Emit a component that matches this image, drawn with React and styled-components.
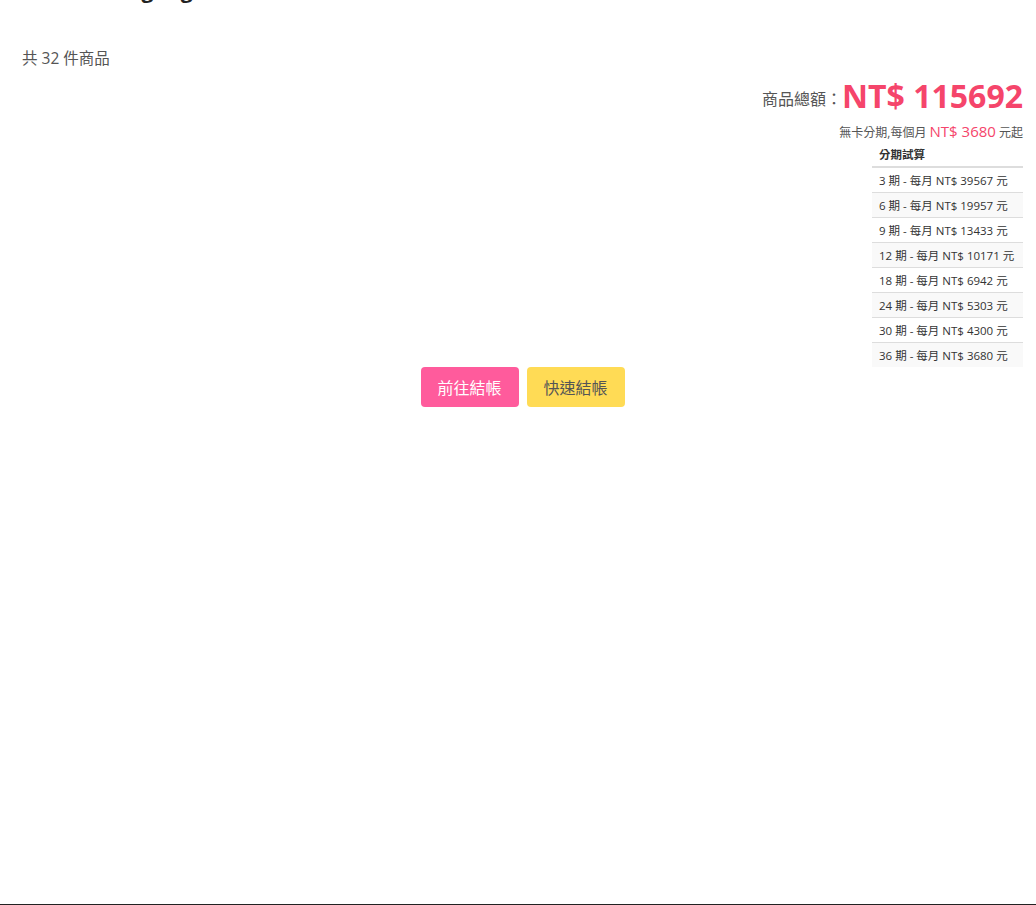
import React from "react";
import styled, { createGlobalStyle } from "styled-components";

const GlobalStyle = createGlobalStyle`
  html, body {
    margin: 0;
    padding: 0;
    background: #fff;
  }
  body {
    font-family: "Open Sans", "Noto Sans CJK TC", sans-serif;
    color: #555;
  }
  * {
    box-sizing: border-box;
  }
`;

const plans = [
  { months: 3, amount: 39567 },
  { months: 6, amount: 19957 },
  { months: 9, amount: 13433 },
  { months: 12, amount: 10171 },
  { months: 18, amount: 6942 },
  { months: 24, amount: 5303 },
  { months: 30, amount: 4300 },
  { months: 36, amount: 3680 },
];

const App = () => {
  return (
    <Page>
      <GlobalStyle />
      <Title>Order listing tag</Title>
      <ItemCount>共 32 件商品</ItemCount>
      <Summary>
        <TotalRow>
          商品總額：<TotalPrice>NT$ 115692</TotalPrice>
        </TotalRow>
        <Installment>
          無卡分期,每個月 <Highlight>NT$ 3680</Highlight> 元起
        </Installment>
        <PlanTable>
          <thead>
            <tr>
              <th>分期試算</th>
            </tr>
          </thead>
          <tbody>
            {plans.map((p) => (
              <tr key={p.months}>
                <td>
                  {p.months} 期 - 每月 NT$ {p.amount} 元
                </td>
              </tr>
            ))}
          </tbody>
        </PlanTable>
      </Summary>
      <Actions>
        <Button $variant="checkout">前往結帳</Button>
        <Button $variant="quick">快速結帳</Button>
      </Actions>
    </Page>
  );
};

const Page = styled.div`
  min-height: 905px;
  padding: 0 13px 0 22px;
  border-bottom: 1px solid #222;
  overflow: hidden;
`;

const Title = styled.h2`
  margin: -24px 0 0;
  font-size: 21px;
  line-height: 28px;
  height: 28px;
  font-weight: 700;
  color: #222;
`;

const ItemCount = styled.div`
  margin-top: 44px;
  font-size: 15.5px;
  line-height: 20px;
`;

const Summary = styled.div`
  display: flex;
  flex-direction: column;
  align-items: flex-end;
`;

const TotalRow = styled.div`
  margin-top: 8px;
  font-size: 16px;
  line-height: 40px;
  color: #555;
`;

const TotalPrice = styled.span`
  font-size: 32px;
  font-weight: 700;
  color: #f5456b;
  vertical-align: -3px;
`;

const Installment = styled.div`
  margin-top: 2px;
  font-size: 12px;
  line-height: 20px;
  color: #555;
`;

const Highlight = styled.span`
  font-size: 15px;
  color: #f5456b;
`;

const PlanTable = styled.table`
  width: 151px;
  margin-top: -1px;
  border-collapse: collapse;
  font-size: 11.5px;
  color: #333;

  th {
    text-align: left;
    font-weight: 700;
    padding: 3px 7px;
    height: 25px;
    border-bottom: 2px solid #ddd;
  }

  td {
    padding: 0 5px 0 7px;
    height: 25px;
    border-top: 1px solid #ddd;
    white-space: nowrap;
  }

  tbody tr:nth-of-type(even) {
    background: #f9f9f9;
  }
`;

const Actions = styled.div`
  display: flex;
  justify-content: center;
  gap: 8px;
`;

const Button = styled.button`
  width: 98px;
  height: 40px;
  border: none;
  border-radius: 4px;
  font-family: inherit;
  font-size: 16px;
  cursor: pointer;
  background: ${(p) => (p.$variant === "checkout" ? "#ff5b9c" : "#ffdb55")};
  color: ${(p) => (p.$variant === "checkout" ? "#fff" : "#555")};
`;

export default App;
